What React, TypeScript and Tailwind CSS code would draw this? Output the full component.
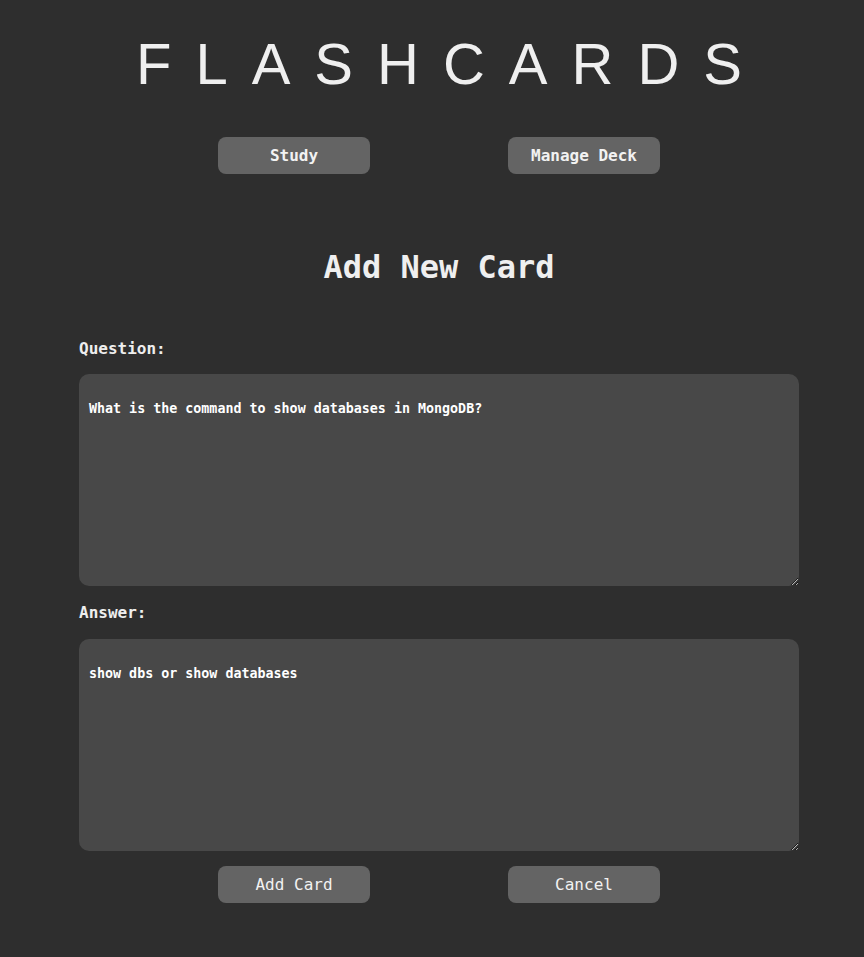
import { useState } from 'react'

const mono = "font-['DejaVu_Sans_Mono',_'Liberation_Mono',_monospace]"

const NavButton = ({ label, bold }: { label: string; bold?: boolean }) => (
  <button
    className={`h-[37px] w-[152px] rounded-lg bg-[#646464] text-base text-[#f2f2f2] ${
      bold ? 'font-bold' : 'font-normal'
    }`}
  >
    {label}
  </button>
)

const App = () => {
  const [question, setQuestion] = useState(
    'What is the command to show databases in MongoDB?'
  )
  const [answer, setAnswer] = useState('show dbs or show databases')

  return (
    <div className={`min-h-[957px] bg-[#2e2e2e] pl-[79px] text-[#eeeeee] ${mono}`}>
      <div className="flex w-[720px] flex-col">
        <h1 className="mt-[35px] text-center font-['Liberation_Sans',_sans-serif] text-[58px] leading-none font-normal tracking-[24px] pl-[24px] text-[#efefef]">
          FLASHCARDS
        </h1>

        <div className="mt-[44px] flex justify-center gap-[138px]">
          <NavButton label="Study" bold />
          <NavButton label="Manage Deck" bold />
        </div>

        <h2 className="mt-[77px] text-center text-[32px] leading-8 font-bold text-[#efefef]">
          Add New Card
        </h2>

        <label className="mt-[54px] text-base leading-6 font-bold">Question:</label>
        <textarea
          value={question}
          onChange={(e) => setQuestion(e.target.value)}
          spellCheck={false}
          className={`mt-[13px] h-[212px] w-[720px] resize-y rounded-[10px] bg-[#484848] px-[10px] pt-[25px] text-[13.333px] font-bold text-white outline-none ${mono}`}
        />

        <label className="mt-[15px] text-base leading-6 font-bold">Answer:</label>
        <textarea
          value={answer}
          onChange={(e) => setAnswer(e.target.value)}
          className={`mt-[14px] h-[212px] w-[720px] resize-y rounded-[10px] bg-[#484848] px-[10px] pt-[25px] text-[13.333px] font-bold text-white outline-none ${mono}`}
        />

        <div className="mt-[15px] flex justify-center gap-[138px]">
          <NavButton label="Add Card" />
          <NavButton label="Cancel" />
        </div>
      </div>
    </div>
  )
}

export default App
